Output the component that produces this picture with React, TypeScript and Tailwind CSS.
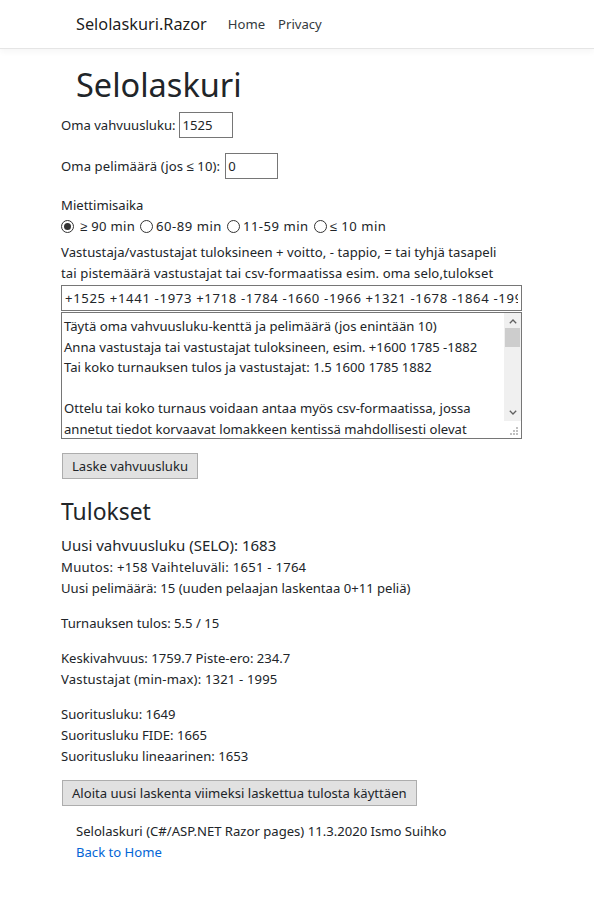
import React from "react"

function Radio({ checked }: { checked?: boolean }) {
  return (
    <span className="inline-flex items-center justify-center w-[13px] h-[13px] rounded-full border border-[#333333] bg-white shrink-0">
      {checked && <span className="w-[7px] h-[7px] rounded-full bg-[#333333]"></span>}
    </span>
  )
}

function Chevron({ up }: { up?: boolean }) {
  return (
    <svg width="8" height="5" viewBox="0 0 8 5" className={up ? "" : "rotate-180"}>
      <path d="M0.8 4.2 L4 1 L7.2 4.2" fill="none" stroke="#606060" strokeWidth="1.3" />
    </svg>
  )
}

const helpLines = [
  "Täytä oma vahvuusluku-kenttä ja pelimäärä (jos enintään 10)",
  "Anna vastustaja tai vastustajat tuloksineen, esim. +1600 1785 -1882",
  "Tai koko turnauksen tulos ja vastustajat: 1.5 1600 1785 1882",
  " ",
  "Ottelu tai koko turnaus voidaan antaa myös csv-formaatissa, jossa",
  "annetut tiedot korvaavat lomakkeen kentissä mahdollisesti olevat",
]

export default function App() {
  return (
    <div className="min-h-screen bg-white text-[#212529] font-['Noto_Sans',sans-serif] text-[13.1px] leading-[21px]">
      {/* Navbar */}
      <header className="h-[49px] border-b border-[#e5e5e5] shadow-[0_3px_6px_rgba(0,0,0,0.04)] flex items-center pl-[76px]">
        <span className="text-[16.3px] text-black/90 mr-[21px]">Selolaskuri.Razor</span>
        <nav className="flex gap-[13px] text-[#343a40]">
          <a href="#">Home</a>
          <a href="#">Privacy</a>
        </nav>
      </header>

      <main className="pl-[61px] pr-[72px]">
        <h1 className="pl-[15px] text-[32.5px] leading-[42px] mt-[15px] mb-[6px]">Selolaskuri</h1>

        <div className="flex items-center h-[26px] mb-[15px]">
          <span className="mr-[4px]">Oma vahvuusluku:</span>
          <input readOnly value="1525" className="w-[54px] h-[26px] border border-[#767676] px-[2px] outline-none" />
        </div>
        <div className="flex items-center h-[26px] mb-[16px]">
          <span className="mr-[5px] tracking-[0.1px]">Oma pelimäärä (jos ≤ 10):</span>
          <input readOnly value="0" className="w-[53px] h-[26px] border border-[#767676] px-[2px] outline-none" />
        </div>

        <div>Miettimisaika</div>
        <div className="flex items-center h-[21px] mb-[5px]">
          <Radio checked />
          <span className="ml-[6px] mr-[5px] tracking-[0.3px]">≥ 90 min</span>
          <Radio />
          <span className="ml-[3px] mr-[5px] tracking-[0.5px]">60-89 min</span>
          <Radio />
          <span className="ml-[3px] mr-[5px] tracking-[0.5px]">11-59 min</span>
          <Radio />
          <span className="ml-[3px] tracking-[0.5px]">≤ 10 min</span>
        </div>

        <p className="tracking-[0.05px]">Vastustaja/vastustajat tuloksineen + voitto, - tappio, = tai tyhjä tasapeli</p>
        <p className="mb-[1px] tracking-[0.1px]">tai pistemäärä vastustajat tai csv-formaatissa esim. oma selo,tulokset</p>
        <input
          readOnly
          value="+1525 +1441 -1973 +1718 -1784 -1660 -1966 +1321 -1678 -1864 -1995 +1534 =1690 -1812 +1747"
          className="block w-[461px] h-[26px] border border-[#767676] px-[3px] outline-none tracking-[0.66px]"
        />
        <div className="mt-[1px] w-[461px] h-[127px] border border-[#767676] flex overflow-hidden">
          <div className="flex-1 pl-[2px] pt-[3px] leading-[20.6px] overflow-hidden whitespace-pre">
            {helpLines.map((l, i) => (
              <div key={i}>{l}</div>
            ))}
          </div>
          <div className="w-[17px] flex flex-col">
            <div className="h-[108px] bg-[#f0f0f0] flex flex-col">
              <div className="h-[17px] flex items-center justify-center"><Chevron up /></div>
              <div className="h-[19px] mx-[1px] -mt-[2px] bg-[#cdcdcd]"></div>
              <div className="flex-1"></div>
              <div className="h-[17px] flex items-center justify-center"><Chevron /></div>
            </div>
            <div className="flex-1 bg-white flex items-end justify-end p-[3px]">
              <svg width="8" height="8" viewBox="0 0 8 8">
                <rect x="6" y="0" width="2" height="2" fill="#c0c0c0" />
                <rect x="3" y="3" width="2" height="2" fill="#c0c0c0" />
                <rect x="6" y="3" width="2" height="2" fill="#c0c0c0" />
                <rect x="0" y="6" width="2" height="2" fill="#c0c0c0" />
                <rect x="3" y="6" width="2" height="2" fill="#c0c0c0" />
                <rect x="6" y="6" width="2" height="2" fill="#c0c0c0" />
              </svg>
            </div>
          </div>
        </div>

        <button className="block mt-[14px] ml-[1px] h-[26px] px-[9px] bg-[#e1e1e1] border border-[#adadad] text-[#212529]">
          Laske vahvuusluku
        </button>

        <h2 className="text-[22.9px] leading-[29px] mt-[18px] mb-[8px]">Tulokset</h2>
        <div className="text-[15px] leading-[23px]">Uusi vahvuusluku (SELO): 1683</div>
        <p className="tracking-[0.25px]">Muutos: +158 Vaihteluväli: 1651 - 1764</p>
        <p className="mb-[14px]">Uusi pelimäärä: 15 (uuden pelaajan laskentaa 0+11 peliä)</p>
        <p className="mb-[14px]">Turnauksen tulos: 5.5 / 15</p>
        <p>Keskivahvuus: 1759.7 Piste-ero: 234.7</p>
        <p className="mb-[14px] tracking-[0.15px]">Vastustajat (min-max): 1321 - 1995</p>
        <p>Suoritusluku: 1649</p>
        <p>Suoritusluku FIDE: 1665</p>
        <p className="mb-[13px]">Suoritusluku lineaarinen: 1653</p>

        <button className="block ml-[1px] h-[26px] px-[9px] bg-[#e1e1e1] border border-[#adadad] text-[#212529]">
          Aloita uusi laskenta viimeksi laskettua tulosta käyttäen
        </button>

        <footer className="pl-[15px] mt-[15px] pb-[40px]">
          <p>Selolaskuri (C#/ASP.NET Razor pages) 11.3.2020 Ismo Suihko</p>
          <a href="#" className="text-[#0366d6]">Back to Home</a>
        </footer>
      </main>
    </div>
  )
}
